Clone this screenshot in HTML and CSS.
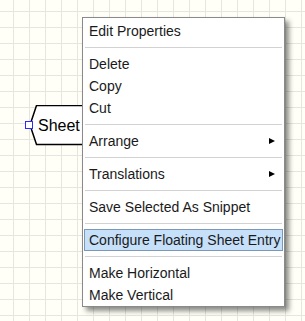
FILE: index.html
```html
<!DOCTYPE html>
<html>
<head>
<meta charset="utf-8">
<link rel="stylesheet" href="styles.css">
</head>
<body>
<div class="canvas">
  <svg class="node" width="120" height="60" viewBox="0 0 120 60">
    <polygon points="110,0.5 7.5,0.5 1,20 7.5,39.5 110,39.5" fill="#fff" stroke="#000" stroke-width="1.5"/>
    <text x="9" y="25.5" class="node-label">Sheet</text>
  </svg>
  <span class="handle"></span>
  <div class="menu">
    <div class="item">Edit Properties</div>
    <div class="sep"></div>
    <div class="item">Delete</div>
    <div class="item">Copy</div>
    <div class="item">Cut</div>
    <div class="sep"></div>
    <div class="item sub">Arrange<span class="arrow"></span></div>
    <div class="sep"></div>
    <div class="item sub">Translations<span class="arrow"></span></div>
    <div class="sep"></div>
    <div class="item">Save Selected As Snippet</div>
    <div class="sep"></div>
    <div class="item active">Configure Floating Sheet Entry</div>
    <div class="sep"></div>
    <div class="item">Make Horizontal</div>
    <div class="item">Make Vertical</div>
  </div>
</div>
</body>
</html>
```
FILE: styles.css
```css
html, body {
  margin: 0;
  padding: 0;
}
.canvas {
  position: relative;
  width: 305px;
  height: 321px;
  overflow: hidden;
  background-color: #fffff7;
  background-image:
    linear-gradient(to right, #e6e6df 1px, transparent 1px),
    linear-gradient(to bottom, #e6e6df 1px, transparent 1px);
  background-size: 16px 16px;
  background-position: 13px 11px;
  font-family: "Liberation Sans", Arial, sans-serif;
}
.node {
  position: absolute;
  left: 29px;
  top: 105px;
}
.node-label {
  font-family: "Liberation Sans", Arial, sans-serif;
  font-size: 16px;
  fill: #000;
}
.handle {
  position: absolute;
  left: 25px;
  top: 121px;
  width: 6px;
  height: 6px;
  border: 1px solid #2b2bff;
  background: #fff;
}
.menu {
  position: absolute;
  left: 82px;
  top: 17px;
  width: 203px;
  box-sizing: border-box;
  border: 1px solid #8a8a8a;
  background: #fff;
  padding: 2px 1px 0;
  box-shadow: 4px 4px 5px rgba(0, 0, 0, 0.45);
  font-size: 14px;
  color: #1a1a1a;
}
.item {
  display: flex;
  align-items: center;
  justify-content: space-between;
  height: 22px;
  box-sizing: border-box;
  padding: 0 7px 0 4px;
  border: 1px solid transparent;
  white-space: nowrap;
}
.item.active {
  background: #c6e0fa;
  border-color: #7b98b6;
}
.arrow {
  width: 0;
  height: 0;
  border-left: 6px solid #000;
  border-top: 3.5px solid transparent;
  border-bottom: 3.5px solid transparent;
}
.sep {
  height: 1px;
  margin: 5px 1px;
  background: #d2d2d2;
}
```
